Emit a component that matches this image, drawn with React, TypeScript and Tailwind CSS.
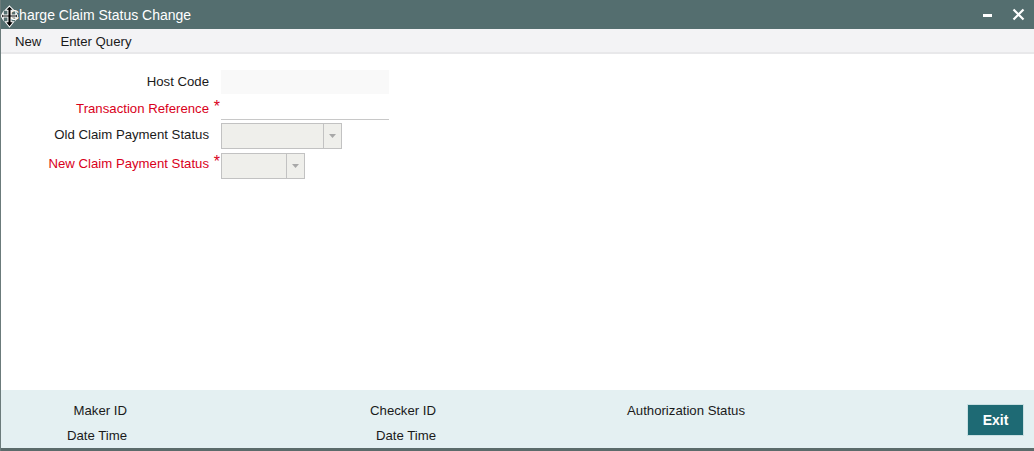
import React from "react";

const font = { fontFamily: '"Liberation Sans", Arial, sans-serif' };

function Caret() {
  return (
    <svg width="7" height="4" viewBox="0 0 7 4">
      <path d="M0 0 L7 0 L3.5 4 Z" fill="#a8a8a8" />
    </svg>
  );
}

function MoveCursor() {
  return (
    <svg
      width="17"
      height="23"
      viewBox="0 0 16 22"
      className="absolute left-0 top-[5px]"
    >
      <path
        d="M8 1 L12 5 L9.5 5 L9.5 9.5 L14 9.5 L14 7 L16 10.5 L14 14 L14 11.5 L9.5 11.5 L9.5 16 L12 16 L8 21 L4 16 L6.5 16 L6.5 11.5 L2 11.5 L2 14 L0 10.5 L2 7 L2 9.5 L6.5 9.5 L6.5 5 L4 5 Z"
        fill="#000"
        stroke="#fff"
        strokeWidth="1"
      />
    </svg>
  );
}

function Label({
  children,
  required,
  className = "",
}: {
  children: React.ReactNode;
  required?: boolean;
  className?: string;
}) {
  return (
    <div className={"relative text-right " + (required ? "text-[#d9001b] " : "") + className}>
      {children}
      {required && (
        <span className="absolute -right-[11px] -top-[4px] text-[16px]">*</span>
      )}
    </div>
  );
}

function Select({ width }: { width: string }) {
  return (
    <div className={"flex h-[26px] border border-[#c2c2c2] bg-[#efefeb] " + width}>
      <div className="flex-1" />
      <div className="flex w-[18px] items-center justify-center border-l border-[#c2c2c2]">
        <Caret />
      </div>
    </div>
  );
}

export default function App() {
  return (
    <div
      className="relative flex h-[451px] w-[1034px] flex-col overflow-hidden border-l border-[#6b7b7b] bg-white text-[13.2px] text-[#1a1a1a]"
      style={font}
    >
      {/* title bar */}
      <div className="flex h-[29px] items-center justify-between bg-[#546e6f] pl-[8px] pr-[9px] text-white">
        <span className="pt-[1px] text-[14px]">Charge Claim Status Change</span>
        <div className="flex items-center gap-[20px]">
          <span className="mt-[1px] block h-[3px] w-[9px] bg-white" />
          <svg width="13" height="13" viewBox="0 0 13 13">
            <path d="M1.5 1.5 L11.5 11.5 M11.5 1.5 L1.5 11.5" stroke="#fff" strokeWidth="2.2" />
          </svg>
        </div>
      </div>
      <MoveCursor />

      {/* toolbar */}
      <div className="flex h-[25px] items-center gap-[19px] border-b-2 border-[#e8e8ea] bg-[#f3f3f5] pl-[14px] pt-[3px]">
        <span>New</span>
        <span>Enter Query</span>
      </div>

      {/* form */}
      <div className="flex-1 pt-[16px]">
        <div className="grid grid-cols-[208px_auto] items-center gap-x-[12px]">
          <Label>Host Code</Label>
          <div className="h-[24px] w-[168px] bg-[#f9f9f9]" />

          <Label required className="mt-[3px]">Transaction Reference</Label>
          <div className="mt-[2px] h-[24px] w-[168px] border-b border-[#c8c8c8] bg-white" />

          <Label>Old Claim Payment Status</Label>
          <div className="mt-[3px]">
            <Select width="w-[121px]" />
          </div>

          <Label required>New Claim Payment Status</Label>
          <div className="mt-[4px]">
            <Select width="w-[84px]" />
          </div>
        </div>
      </div>

      {/* footer */}
      <div className="flex h-[61px] border-b-[3px] border-[#5b6b6b] bg-[#e4f0f2]">
        <div className="grid w-[126px] grid-rows-2 pt-[8px] text-right leading-[25px]">
          <span>Maker ID</span>
          <span>Date Time</span>
        </div>
        <div className="grid w-[309px] grid-rows-2 pt-[8px] text-right leading-[25px]">
          <span>Checker ID</span>
          <span>Date Time</span>
        </div>
        <div className="pl-[191px] pt-[8px] leading-[25px]">Authorization Status</div>
        <div className="flex-1" />
        <div className="pr-[10px] pt-[14px]">
          <button className="h-[32px] w-[57px] border border-[#c9dfe2] bg-[#1e6a74] text-[14px] font-bold text-white">
            Exit
          </button>
        </div>
      </div>
    </div>
  );
}
